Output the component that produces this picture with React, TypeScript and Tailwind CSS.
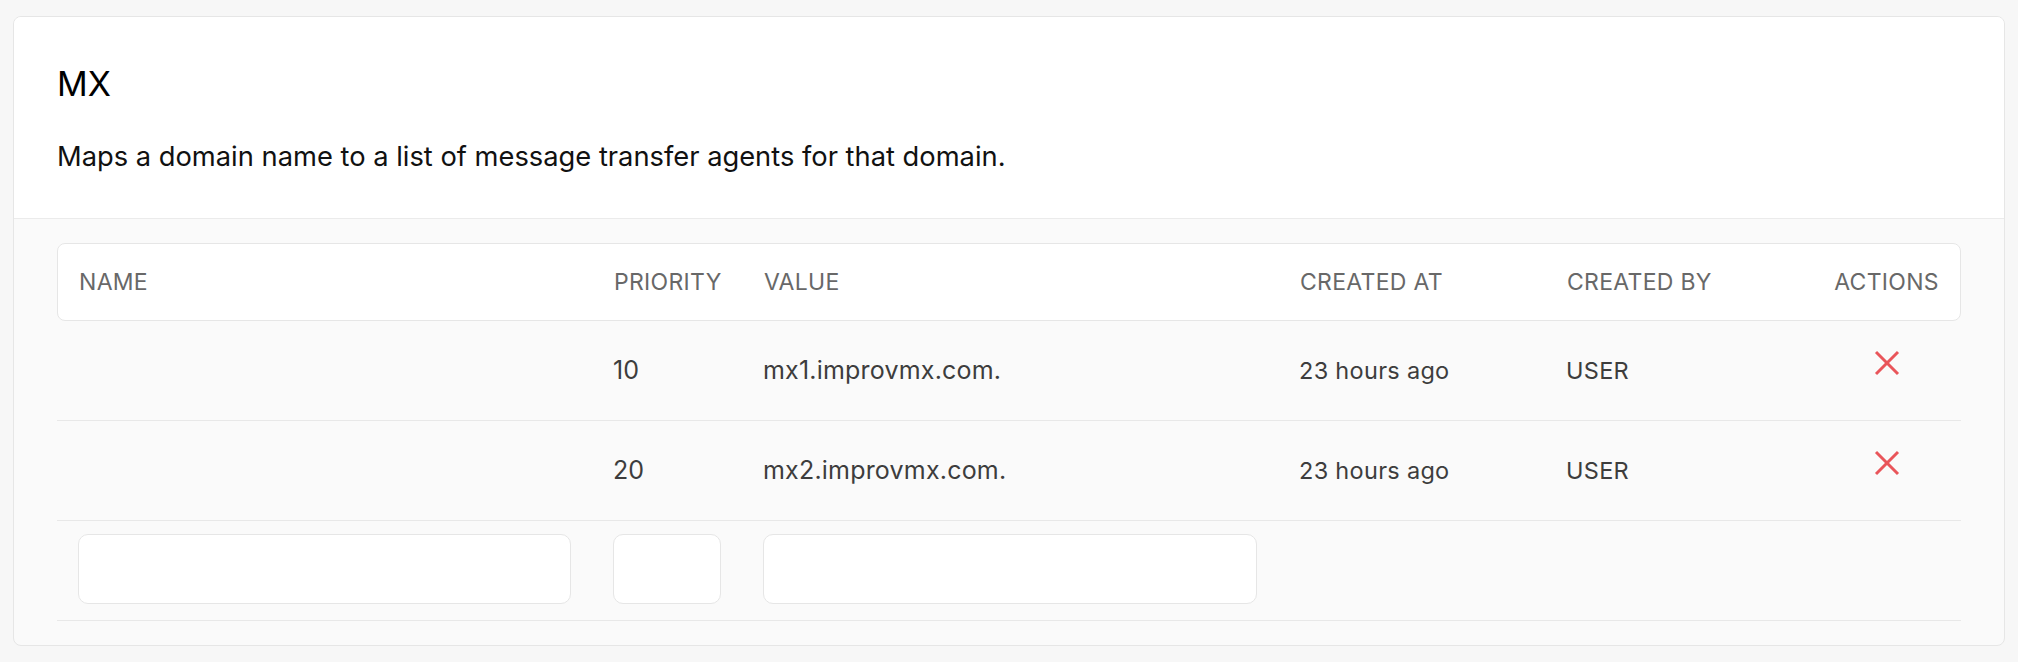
import React from 'react';

const COLS = 'grid grid-cols-[535px_150px_536px_267px_267px_1fr]';

const records = [
  { name: '', priority: '10', value: 'mx1.improvmx.com.', createdAt: '23 hours ago', createdBy: 'USER' },
  { name: '', priority: '20', value: 'mx2.improvmx.com.', createdAt: '23 hours ago', createdBy: 'USER' },
];

const RemoveIcon = () => (
  <svg width="26" height="26" viewBox="0 0 26 26" fill="none" stroke="#e9555a" strokeWidth="3">
    <line x1="2" y1="2" x2="24" y2="24" />
    <line x1="24" y1="2" x2="2" y2="24" />
  </svg>
);

export default function App() {
  return (
    <div className="min-h-[662px] bg-[#f7f7f7] px-[13px] pt-[16px] font-['Inter',sans-serif]">
      <div className="w-[1992px] rounded-[8px] border border-[#e6e6e6] bg-[#fafafa] overflow-hidden">
        <div className="bg-white border-b border-[#ebebeb] px-[43px] pt-[47px] pb-[45px]">
          <h2 className="text-[34px] leading-[40px] text-black">MX</h2>
          <p className="mt-[37px] text-[27.3px] leading-[32px] text-[#111]">
            Maps a domain name to a list of message transfer agents for that domain.
          </p>
        </div>

        <div className="px-[43px] py-[24px]">
          <div className={`${COLS} h-[78px] items-center rounded-[8px] border border-[#e6e6e6] bg-white text-[23px] tracking-[0.3px] text-[#686868] uppercase`}>
            <div className="px-[21px]">Name</div>
            <div className="px-[21px]">Priority</div>
            <div className="px-[21px]">Value</div>
            <div className="px-[21px]">Created at</div>
            <div className="px-[21px]">Created by</div>
            <div className="px-[21px] text-center">Actions</div>
          </div>

          {records.map((r, i) => (
            <div key={i} className={`${COLS} h-[100px] items-center border-b border-[#e8e8e8] text-[#3d3d3d]`}>
              <div className="px-[21px] text-[25px]">{r.name}</div>
              <div className="px-[21px] text-[25px]">{r.priority}</div>
              <div className="px-[21px] text-[25px] tracking-[0.2px]">{r.value}</div>
              <div className="px-[21px] text-[23.5px] tracking-[0.3px]">{r.createdAt}</div>
              <div className="px-[21px] text-[23.5px] tracking-[0.3px]">{r.createdBy}</div>
              <div className="flex justify-center pb-[16px]">
                <button type="button" aria-label="Delete record">
                  <RemoveIcon />
                </button>
              </div>
            </div>
          ))}

          <div className={`${COLS} h-[100px] items-center border-b border-[#e8e8e8] pb-[3px]`}>
            <div className="px-[21px]">
              <input className="block h-[70px] w-full rounded-[10px] border border-[#e6e6e6] bg-white outline-none" />
            </div>
            <div className="px-[21px]">
              <input className="block h-[70px] w-full rounded-[10px] border border-[#e6e6e6] bg-white outline-none" />
            </div>
            <div className="px-[21px]">
              <input className="block h-[70px] w-full rounded-[10px] border border-[#e6e6e6] bg-white outline-none" />
            </div>
            <div />
            <div />
            <div />
          </div>
        </div>
      </div>
    </div>
  );
}
